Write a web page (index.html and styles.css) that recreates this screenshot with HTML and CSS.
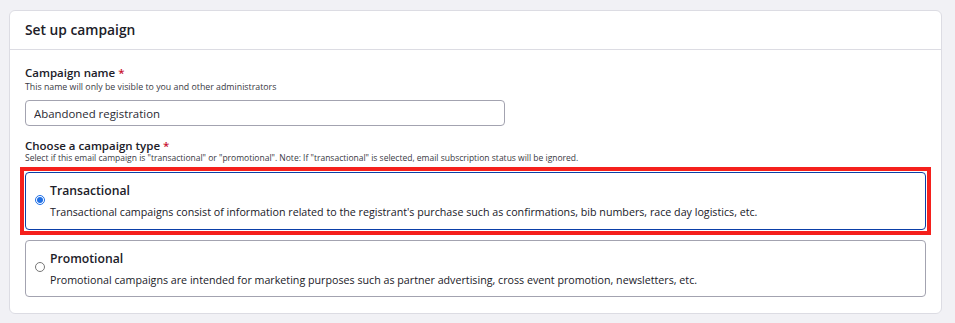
FILE: index.html
```html
<!DOCTYPE html>
<html lang="en">
  <head>
    <meta charset="UTF-8" />
    <meta name="viewport" content="width=device-width, initial-scale=1.0" />
    <title>Set up campaign</title>
    <link rel="stylesheet" href="styles.css">
  </head>

  <body>
    <div class="panel">
      <div class="panel__header">Set up campaign</div>

      <div class="panel__body">
        <!-- campaign name -->
        <div class="field field--name">
          <label class="field__label" for="campaign-name">Campaign name <span class="req">*</span></label>
          <div class="field__hint">This name will only be visible to you and other administrators</div>
          <input class="field__input" type="text" id="campaign-name" value="Abandoned registration" />
        </div>

        <!-- campaign type -->
        <div class="field field--type">
          <div class="field__label">Choose a campaign type <span class="req">*</span></div>
          <div class="field__hint">Select if this email campaign is "transactional" or "promotional". Note: If "transactional" is selected, email subscription status will be ignored.</div>

          <!-- highlighted option -->
          <div class="highlight">
            <label class="option option--selected">
              <input class="option__radio" type="radio" name="type" value="transactional" checked />
              <span class="option__text">
                <span class="option__title">Transactional</span>
                <span class="option__desc">Transactional campaigns consist of information related to the registrant's purchase such as confirmations, bib numbers, race day logistics, etc.</span>
              </span>
            </label>
          </div>

          <label class="option">
            <input class="option__radio" type="radio" name="type" value="promotional" />
            <span class="option__text">
              <span class="option__title">Promotional</span>
              <span class="option__desc">Promotional campaigns are intended for marketing purposes such as partner advertising, cross event promotion, newsletters, etc.</span>
            </span>
          </label>
        </div>
      </div>
    </div>
  </body>
</html>
```

FILE: styles.css
```css
body {
  font-family: "Open Sans", "Noto Sans", sans-serif;
  margin: 0;
  padding: 10px 13px 0 9px;
  background-color: #f1f1f5;
  color: #202028;
}

.panel {
  background-color: #fff;
  border: 1px solid #dcdce3;
  border-radius: 6px;
}

.panel__header {
  height: 38px;
  line-height: 38px;
  padding: 0 15px;
  font-size: 13.8px;
  font-weight: 600;
  border-bottom: 1px solid #dcdce3;
}

.panel__body {
  padding: 16px 15px 16px;
}

.field {
  display: flex;
  flex-direction: column;
}

.field__label {
  font-size: 11.5px;
  font-weight: 600;
  line-height: 14px;
}

.req {
  color: #c8102e;
}

.field__hint {
  font-size: 8.5px;
  line-height: 10px;
  color: #3a3a44;
}

.field--name .field__hint {
  font-size: 8.8px;
  margin: 2px 0 8px;
}

.field--type {
  margin-top: 13px;
}

.field--type .field__hint {
  margin-bottom: 4px;
}

.field__input {
  width: 480px;
  height: 26px;
  box-sizing: border-box;
  padding: 0 8px;
  border: 1px solid #a3a3b0;
  border-radius: 4px;
  font-family: inherit;
  font-size: 11.4px;
  color: #2a2a33;
}

.highlight {
  margin: 0 -5px;
  padding: 1px;
  border: 4px solid #f5201c;
}

.option {
  display: flex;
  align-items: center;
  height: 58px;
  box-sizing: border-box;
  padding: 0 15px 3px 9px;
  border: 1px solid #a3a3b0;
  border-radius: 4px;
  cursor: pointer;
}

.highlight + .option {
  margin-top: 5px;
  height: 57px;
}

.option--selected {
  border-color: #0b3fa8;
}

.option__radio {
  width: 10px;
  height: 10px;
  margin: 0 5px 0 0;
  accent-color: #1f6fe5;
}

.option__text {
  display: flex;
  flex-direction: column;
  padding-top: 4px;
}

.option__title {
  font-size: 12.2px;
  font-weight: 600;
  line-height: 16px;
}

.option__desc {
  font-size: 10.7px;
  line-height: 16px;
  margin-top: 5px;
}
```
